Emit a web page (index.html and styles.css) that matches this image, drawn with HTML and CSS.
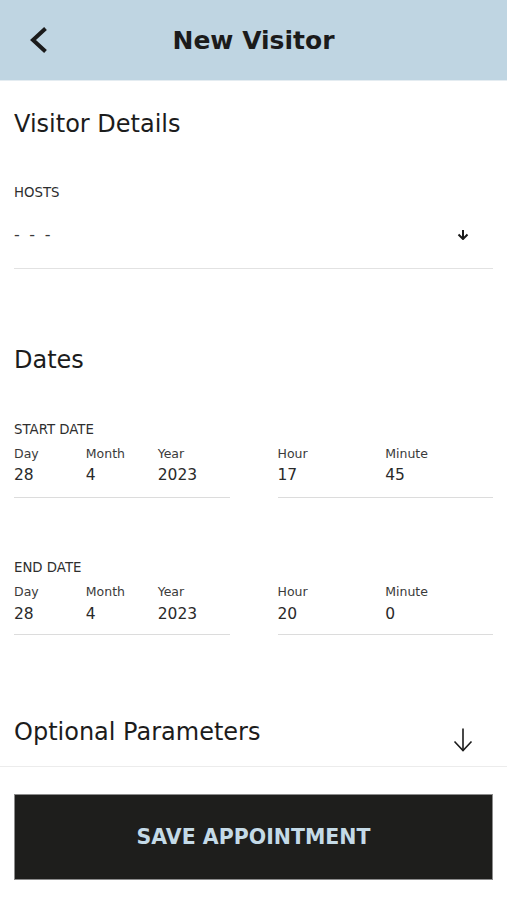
FILE: index.html
```html
<!DOCTYPE html>
<html>
<head>
	<meta charset="utf-8">
	<meta name="viewport" content="width=device-width, initial-scale=1">
	<link rel="stylesheet" href="styles.css">
</head>
<body>
<div class="screen">
   <header class="topbar">
      <button class="back" aria-label="Back">
         <svg width="20" height="28" viewBox="0 0 20 28">
            <polyline points="16.5,2.5 4,14 16.5,25.5" fill="none" stroke="#1b1b1b" stroke-width="4" stroke-linejoin="miter"/>
         </svg>
      </button>
      <h1>New Visitor</h1>
      <div></div>
   </header>

   <main class="form">
      <section class="block">
         <h2 class="title details-title">Visitor Details</h2>
         <div class="field">
            <label class="caps">HOSTS</label>
            <div class="select-row">
               <span class="value dashes">- - -</span>
               <svg class="small-arrow" width="12" height="10" viewBox="0 0 12 10">
                  <line x1="6" y1="0" x2="6" y2="8.5" stroke="#1b1b1b" stroke-width="2"/>
                  <polyline points="1.5,4.5 6,9 10.5,4.5" fill="none" stroke="#1b1b1b" stroke-width="2"/>
               </svg>
            </div>
         </div>
      </section>

      <section class="block">
         <h2 class="title dates-title">Dates</h2>

         <div class="date-group start">
            <label class="caps">START DATE</label>
            <div class="date-row">
               <div class="part three">
                  <div class="cell"><span class="lbl">Day</span><span class="num">28</span></div>
                  <div class="cell"><span class="lbl">Month</span><span class="num">4</span></div>
                  <div class="cell"><span class="lbl">Year</span><span class="num">2023</span></div>
               </div>
               <div class="part two">
                  <div class="cell"><span class="lbl">Hour</span><span class="num">17</span></div>
                  <div class="cell"><span class="lbl">Minute</span><span class="num">45</span></div>
               </div>
            </div>
         </div>

         <div class="date-group end">
            <label class="caps">END DATE</label>
            <div class="date-row">
               <div class="part three">
                  <div class="cell"><span class="lbl">Day</span><span class="num">28</span></div>
                  <div class="cell"><span class="lbl">Month</span><span class="num">4</span></div>
                  <div class="cell"><span class="lbl">Year</span><span class="num">2023</span></div>
               </div>
               <div class="part two">
                  <div class="cell"><span class="lbl">Hour</span><span class="num">20</span></div>
                  <div class="cell"><span class="lbl">Minute</span><span class="num">0</span></div>
               </div>
            </div>
         </div>
      </section>

      <section class="optional">
         <h2 class="title">Optional Parameters</h2>
         <svg class="big-arrow" width="20" height="24" viewBox="0 0 20 24">
            <line x1="10" y1="0.5" x2="10" y2="22.5" stroke="#1b1b1b" stroke-width="1.6"/>
            <polyline points="1.5,13.5 10,22.5 18.5,13.5" fill="none" stroke="#1b1b1b" stroke-width="1.6"/>
         </svg>
      </section>

      <div class="actions">
         <button class="save">SAVE APPOINTMENT</button>
      </div>
   </main>
</div>
</body>
</html>
```

FILE: styles.css
```css
body {
   margin: 0;
   background: #ffffff;
   font-family: "DejaVu Sans", "Noto Sans", sans-serif;
   color: #1c1c1c;
}

.screen {
   width: 507px;
   min-height: 900px;
}

.topbar {
   height: 80px;
   display: grid;
   grid-template-columns: 1fr auto 1fr;
   align-items: center;
   background: #bfd5e2;
   border-bottom: 1px solid #e4ecf1;
}

.topbar h1 {
   margin: 0;
   padding-top: 2px;
   font-size: 25px;
   line-height: 30px;
   font-weight: bold;
   color: #1b1b1b;
}

.back {
   justify-self: start;
   background: none;
   border: none;
   padding: 0;
   margin: 0 0 0 29px;
   display: flex;
   cursor: pointer;
}

.block {
   padding: 0 14px;
}

.title {
   margin: 0;
   font-size: 24px;
   line-height: 30px;
   font-weight: normal;
   color: #1c1c1c;
}

.details-title {
   margin-top: 28px;
}

.caps {
   display: block;
   font-size: 13.3px;
   line-height: 16px;
   color: #2e2e2e;
}

.field {
   margin-top: 46px;
   padding-bottom: 23px;
   border-bottom: 1px solid #e2e2e2;
}

.select-row {
   margin-top: 24px;
   display: flex;
   align-items: center;
   justify-content: space-between;
}

.value {
   font-size: 16px;
   line-height: 20px;
   color: #3a3a3a;
}

.dashes {
   word-spacing: 4.5px;
}

.small-arrow {
   margin-right: 24px;
}

.dates-title {
   margin-top: 76px;
}

.date-group.start {
   margin-top: 47px;
}

.date-group.end {
   margin-top: 62px;
}

.date-row {
   display: flex;
   gap: 48px;
   margin-top: 8px;
}

.part {
   flex: 1;
   display: grid;
   padding-bottom: 12px;
   border-bottom: 1px solid #dcdcdc;
}

.part.three {
   grid-template-columns: repeat(3, 1fr);
}

.part.two {
   grid-template-columns: repeat(2, 1fr);
}

.cell {
   display: flex;
   flex-direction: column;
}

.lbl {
   font-size: 12.5px;
   line-height: 16px;
   color: #3a3a3a;
}

.num {
   margin-top: 3px;
   font-size: 15.5px;
   line-height: 20px;
   color: #2a2a2a;
}

.end .num {
   margin-top: 4px;
}

.end .part {
   padding-bottom: 10px;
}

.optional {
   margin-top: 82px;
   padding: 0 34px 19px 14px;
   display: flex;
   justify-content: space-between;
   align-items: flex-end;
   border-bottom: 1px solid #ececec;
}

.big-arrow {
   margin-bottom: -5px;
}

.actions {
   padding: 27px 14px 0;
}

.save {
   width: 100%;
   height: 86px;
   display: flex;
   align-items: center;
   justify-content: center;
   background: #1e1e1c;
   border: 1px solid #8c8c8c;
   color: #c4dae7;
   font-family: "DejaVu Sans", sans-serif;
   font-size: 20.5px;
   line-height: 24px;
   font-weight: bold;
   cursor: pointer;
}
```
